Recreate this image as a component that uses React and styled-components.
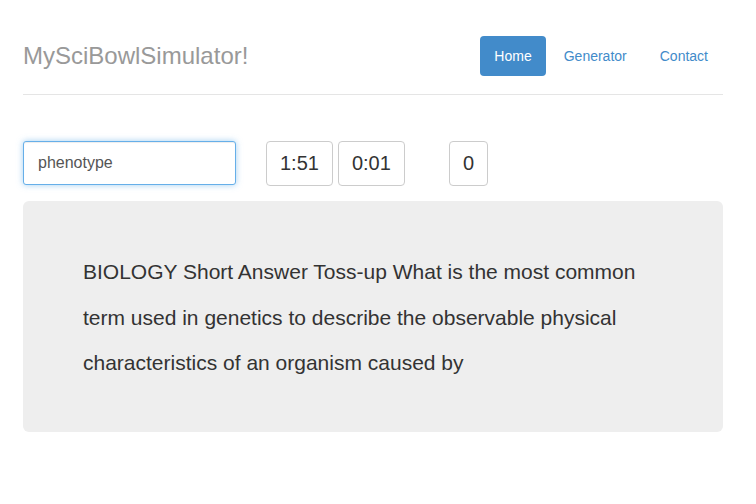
import React, { useState } from 'react';
import styled, { createGlobalStyle } from 'styled-components';

const GlobalStyle = createGlobalStyle`
  * { box-sizing: border-box; }
  body {
    margin: 0;
    background: #fff;
    font-family: 'Liberation Sans', Arial, sans-serif;
    font-size: 14px;
    color: #333;
  }
`;

const Page = styled.div`
  width: 700px;
  margin-left: 23px;
`;

const Header = styled.header`
  display: flex;
  align-items: center;
  justify-content: space-between;
  height: 95px;
  padding-top: 36px;
  padding-bottom: 19px;
  border-bottom: 1px solid #e5e5e5;
`;

const Brand = styled.h3`
  margin: 0;
  font-size: 24px;
  font-weight: normal;
  color: #999;
`;

const Nav = styled.nav`
  display: flex;
  gap: 3px;
`;

const NavLink = styled.a`
  display: block;
  height: 40px;
  line-height: 40px;
  padding: 0 ${(p) => (p.$active ? 14 : 15)}px;
  border-radius: 4px;
  font-size: 14px;
  text-decoration: none;
  cursor: pointer;
  color: ${(p) => (p.$active ? '#fff' : '#428bca')};
  background: ${(p) => (p.$active ? '#428bca' : 'transparent')};
`;

const Controls = styled.div`
  display: flex;
  align-items: flex-start;
  margin-top: 46px;
  height: 60px;
`;

const AnswerInput = styled.input`
  width: 213px;
  height: 44px;
  padding: 0 14px;
  font-family: inherit;
  font-size: 16px;
  color: #555;
  border: 1px solid #66afe9;
  border-radius: 3px;
  outline: none;
  box-shadow: inset 0 1px 1px rgba(0, 0, 0, 0.075), 0 0 6px rgba(102, 175, 233, 0.6);
`;

const Clocks = styled.div`
  display: flex;
  gap: 5px;
  margin-left: 30px;
`;

const Counter = styled.div`
  height: 45px;
  padding: 0 13px;
  display: flex;
  align-items: center;
  font-size: 20px;
  color: #333;
  border: 1px solid #ccc;
  border-radius: 4px;
  background: #fff;
`;

const Score = styled(Counter)`
  margin-left: 44px;
`;

const Jumbotron = styled.div`
  background: #eee;
  border-radius: 6px;
  padding: 48px 60px;
  height: 231px;
`;

const Question = styled.p`
  margin: 0;
  font-size: 21px;
  line-height: 45.5px;
  color: #333;
`;

const App = () => {
  const [answer, setAnswer] = useState('phenotype');

  return (
    <>
      <GlobalStyle />
      <Page>
        <Header>
          <Brand>MySciBowlSimulator!</Brand>
          <Nav>
            <NavLink $active>Home</NavLink>
            <NavLink>Generator</NavLink>
            <NavLink>Contact</NavLink>
          </Nav>
        </Header>
        <Controls>
          <AnswerInput value={answer} onChange={(e) => setAnswer(e.target.value)} />
          <Clocks>
            <Counter>1:51</Counter>
            <Counter>0:01</Counter>
          </Clocks>
          <Score>0</Score>
        </Controls>
        <Jumbotron>
          <Question>
            BIOLOGY Short Answer Toss-up What is the most common term used in genetics to
            describe the observable physical characteristics of an organism caused by
          </Question>
        </Jumbotron>
      </Page>
    </>
  );
};

export default App;
